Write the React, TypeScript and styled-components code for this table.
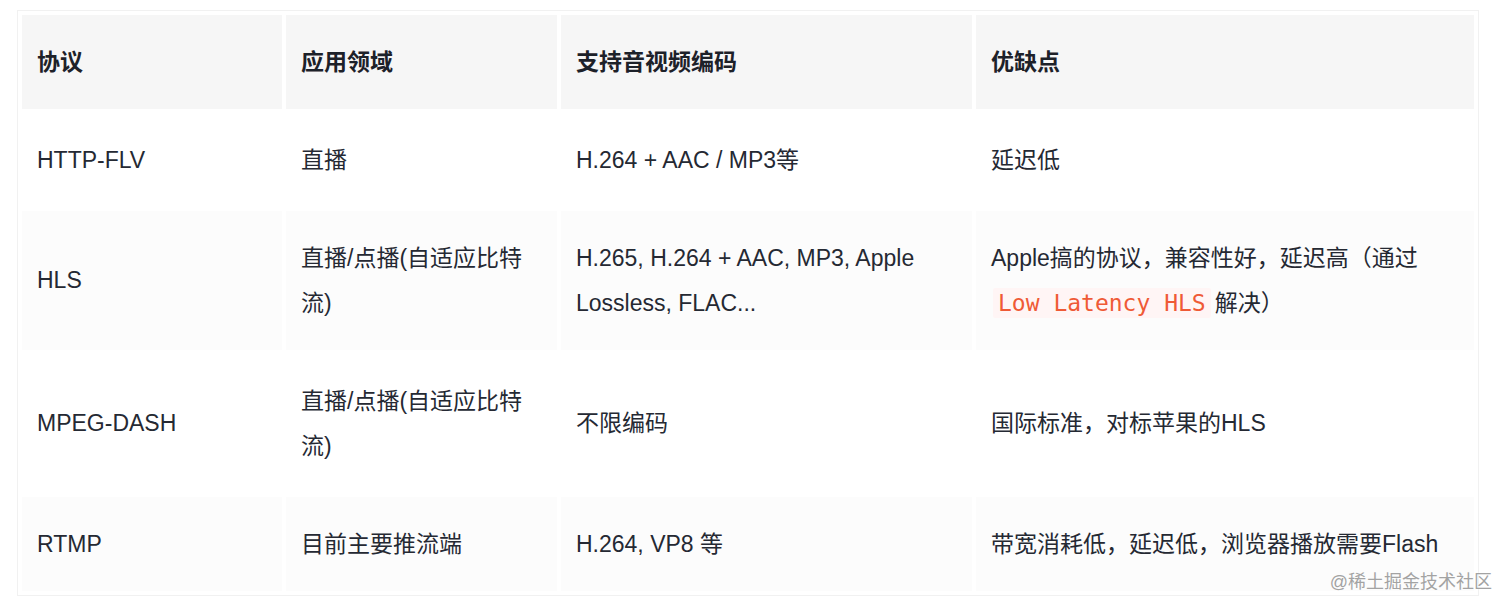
import React from "react";
import styled, { createGlobalStyle } from "styled-components";

const GlobalStyle = createGlobalStyle`
  html, body {
    margin: 0;
    padding: 0;
    background: #ffffff;
  }
  body {
    font-family: "Liberation Sans", "Noto Sans CJK SC", sans-serif;
    color: #252933;
  }
`;

const Page = styled.div`
  position: relative;
  height: 611px;
  padding: 10px 0 0 17px;
  box-sizing: border-box;
  overflow: hidden;
`;

const Frame = styled.div`
  width: 1462px;
  box-sizing: border-box;
  border: 1px solid #f1f1f1;
  background: #ffffff;
`;

const Table = styled.table`
  width: 100%;
  table-layout: fixed;
  border-collapse: separate;
  border-spacing: 4px;
  font-size: 23px;
  line-height: 45px;
`;

const HeadCell = styled.th`
  background: #f6f6f6;
  text-align: left;
  font-weight: 700;
  color: #1d2129;
  padding: 24.5px 14px 24.5px 15px;
  vertical-align: middle;
`;

const Cell = styled.td<{ $shade?: boolean; $padRight?: number }>`
  background: ${(p) => (p.$shade ? "#fcfcfc" : "#ffffff")};
  padding: 24.5px ${(p) => p.$padRight ?? 14}px 24.5px 15px;
  vertical-align: middle;
  color: #252933;
`;

const Code = styled.code`
  font-family: "DejaVu Sans Mono", "Liberation Mono", monospace;
  font-size: 23px;
  color: #ef5a36;
  background: #fff5f5;
  border-radius: 2px;
  padding: 2px 5px;
  margin: 0 4px 0 2px;
  white-space: nowrap;
`;

const Watermark = styled.div`
  position: absolute;
  right: 20px;
  bottom: 17px;
  font-size: 18px;
  line-height: 24px;
  color: #a3a3a3;
  text-shadow: 0 0 2px #ffffff, 0 0 1px #ffffff;
  pointer-events: none;
`;

type Row = {
  protocol: string;
  field: string;
  codec: string;
  note: React.ReactNode;
};

const rows: Row[] = [
  { protocol: "HTTP-FLV", field: "直播", codec: "H.264 + AAC / MP3等", note: "延迟低" },
  {
    protocol: "HLS",
    field: "直播/点播(自适应比特流)",
    codec: "H.265, H.264 + AAC, MP3, Apple Lossless, FLAC...",
    note: (
      <>
        Apple搞的协议，兼容性好，延迟高（通过<Code>Low Latency HLS</Code>解决）
      </>
    ),
  },
  {
    protocol: "MPEG-DASH",
    field: "直播/点播(自适应比特流)",
    codec: "不限编码",
    note: "国际标准，对标苹果的HLS",
  },
  {
    protocol: "RTMP",
    field: "目前主要推流端",
    codec: "H.264, VP8 等",
    note: "带宽消耗低，延迟低，浏览器播放需要Flash",
  },
];

const widths = [260, 271, 411, 498];
const headers = ["协议", "应用领域", "支持音视频编码", "优缺点"];

export default function App() {
  return (
    <>
      <GlobalStyle />
      <Page>
        <Frame>
          <Table>
            <colgroup>
              {widths.map((w, i) => (
                <col key={i} style={{ width: w }} />
              ))}
            </colgroup>
            <thead>
              <tr>
                {headers.map((h) => (
                  <HeadCell key={h}>{h}</HeadCell>
                ))}
              </tr>
            </thead>
            <tbody>
              {rows.map((r, i) => {
                const shade = i % 2 === 1;
                return (
                  <tr key={r.protocol}>
                    <Cell $shade={shade}>{r.protocol}</Cell>
                    <Cell $shade={shade} $padRight={34}>
                      {r.field}
                    </Cell>
                    <Cell $shade={shade}>{r.codec}</Cell>
                    <Cell $shade={shade}>{r.note}</Cell>
                  </tr>
                );
              })}
            </tbody>
          </Table>
        </Frame>
        <Watermark>@稀土掘金技术社区</Watermark>
      </Page>
    </>
  );
}
